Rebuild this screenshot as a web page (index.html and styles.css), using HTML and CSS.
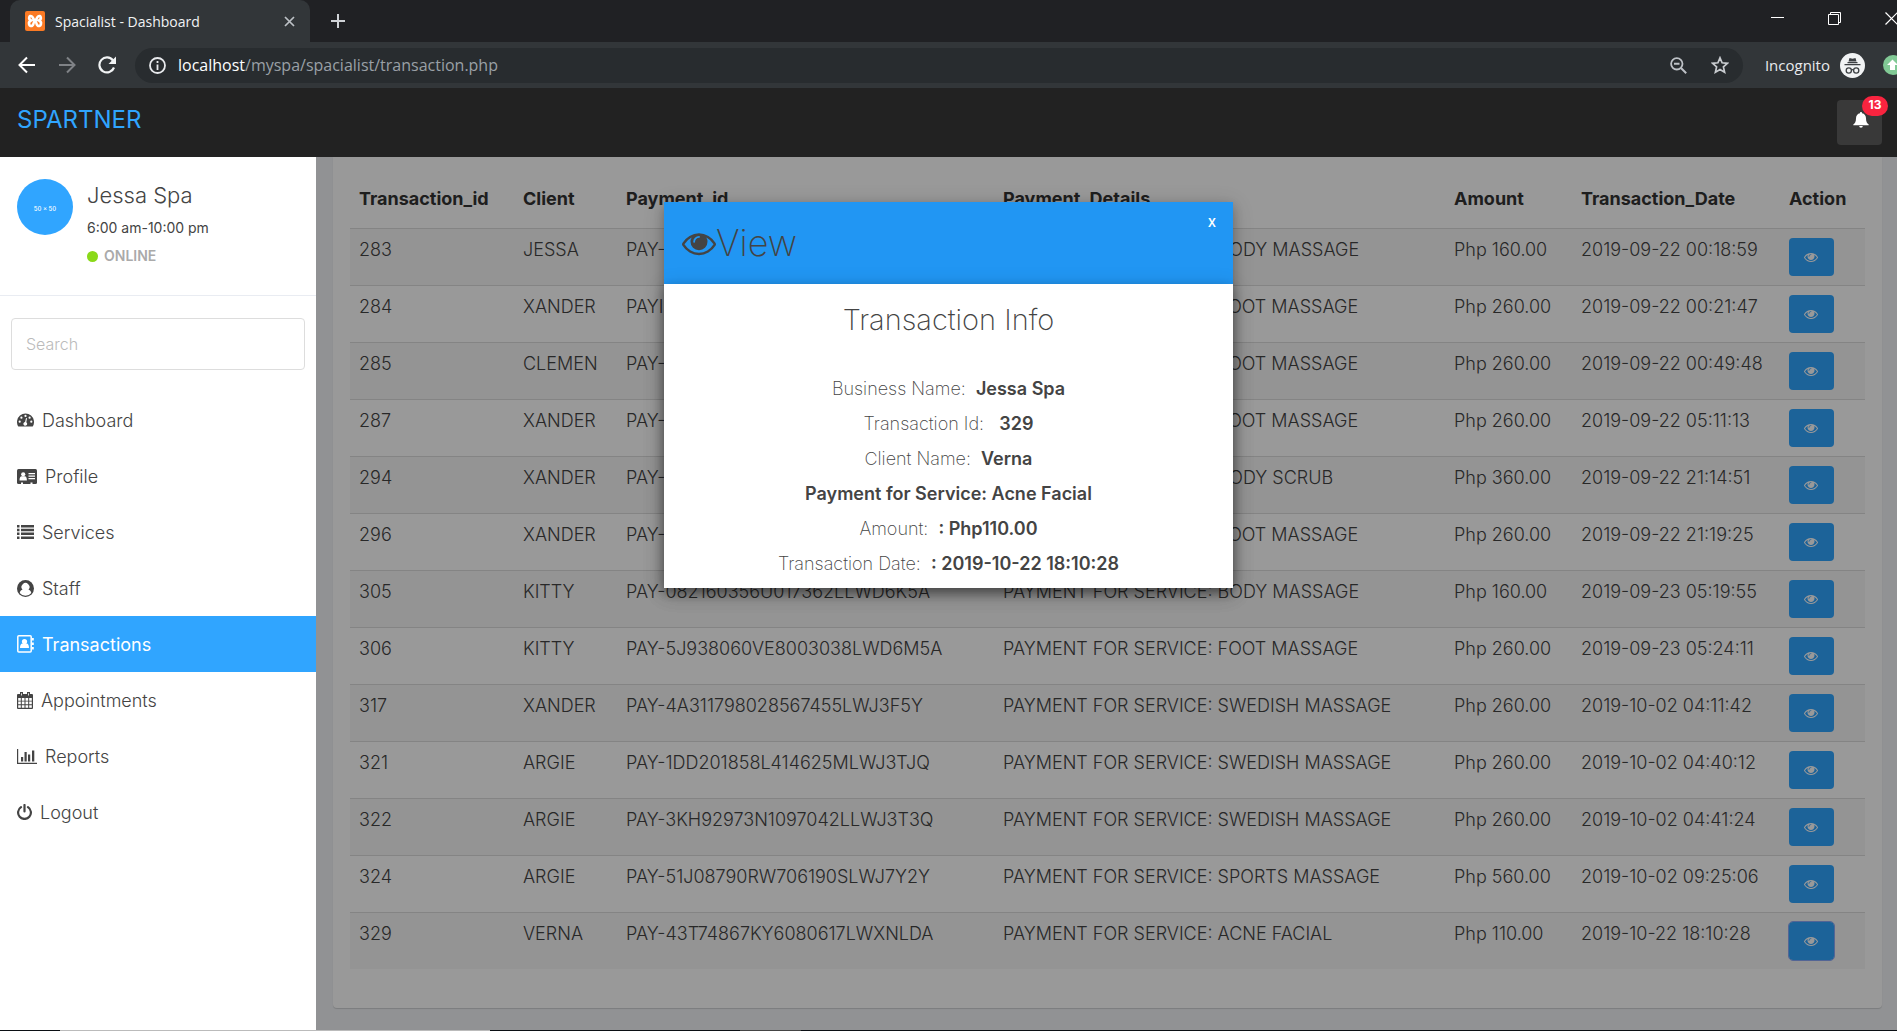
FILE: index.html
```html
<!DOCTYPE html>
<html lang="en">
<head>
<meta charset="utf-8">
<title>Spacialist - Dashboard</title>
<link rel="stylesheet" href="styles.css">
</head>
<body>
<svg class="sprite" aria-hidden="true">
  <symbol id="eye" viewBox="0 0 1792 1792"><path d="M1664 960q-152-236-381-353 61 104 61 225 0 185-131.5 316.5t-316.5 131.5-316.5-131.5-131.5-316.5q0-121 61-225-229 117-381 353 133 205 333.5 326.5t434.5 121.5 434.5-121.5 333.5-326.5zm-720-384q0-20-14-34t-34-14q-125 0-214.5 89.5t-89.5 214.5q0 20 14 34t34 14 34-14 14-34q0-86 61-147t147-61q20 0 34-14t14-34zm848 384q0 34-20 69-140 230-376.5 368.5t-499.5 138.5-499.5-139-376.5-368q-20-35-20-69t20-69q140-229 376.5-368t499.5-139 499.5 139 376.5 368q20 35 20 69z"/></symbol>
</svg>

<div class="browser">
  <div class="tabs">
    <div class="tab">
      <svg class="favicon" viewBox="0 0 20 20"><rect width="20" height="20" rx="2" fill="#fb7a24"/><path d="M7 5.500C4 3.500 3 8 6 9.500C2.500 11 4 16.500 7.500 14.500C9 13.500 8 10.500 10 10.500S11 13.500 12.500 14.500C16 16.500 17.500 11 14 9.500C17 8 16 3.500 13 5.500C11.500 6.500 12 9 10 9S8.500 6.500 7 5.500Z" fill="none" stroke="#fff" stroke-width="2.600"/></svg>
      <span class="tab-title">Spacialist - Dashboard</span>
      <button class="plain" aria-label="Close tab"><svg width="11" height="11" viewBox="0 0 11 11"><path d="M1 1l9 9M10 1l-9 9" stroke="#bdc1c6" stroke-width="1.700"/></svg></button>
    </div>
    <button class="plain" aria-label="New tab"><svg width="16" height="16" viewBox="0 0 16 16"><path d="M8 1v14M1 8h14" stroke="#d0d3d7" stroke-width="2"/></svg></button>
    <div class="window-buttons">
      <button class="plain" aria-label="Minimize"><svg width="13" height="13" viewBox="0 0 13 13"><path d="M0 5.500h13" stroke="#fff"/></svg></button>
      <button class="plain" aria-label="Restore"><svg width="13" height="13" viewBox="0 0 13 13"><path d="M.5 2.500h10v10H.5zM2.500 2.500v-2h10v10h-2" fill="none" stroke="#fff"/></svg></button>
      <button class="plain" aria-label="Close"><svg width="13" height="13" viewBox="0 0 13 13"><path d="M.5.5l12 12M12.500.5l-12 12" stroke="#fff" stroke-width="1.200"/></svg></button>
    </div>
  </div>
  <div class="toolbar">
    <div class="nav-buttons">
      <button class="plain" aria-label="Back"><svg width="18" height="18" viewBox="0 0 18 18"><path d="M17 9H2M9 1.500L1.500 9 9 16.500" fill="none" stroke="#fff" stroke-width="2"/></svg></button>
      <button class="plain" aria-label="Forward"><svg width="18" height="18" viewBox="0 0 18 18"><path d="M1 9h15M9 1.500L16.500 9 9 16.500" fill="none" stroke="#7f8286" stroke-width="2"/></svg></button>
      <button class="plain" aria-label="Reload"><svg width="18" height="18" viewBox="0 0 18 18"><path d="M15 4.500A7.500 7.500 0 1 0 16 11.500" fill="none" stroke="#f1f3f4" stroke-width="2.200"/><path d="M18 .5V8h-7.500z" fill="#f1f3f4"/></svg></button>
    </div>
    <div class="address">
      <svg width="17" height="17" viewBox="0 0 17 17"><circle cx="8.500" cy="8.500" r="7.500" fill="none" stroke="#e8eaed" stroke-width="1.800"/><path d="M8.500 4v2M8.500 7.500V13" stroke="#e8eaed" stroke-width="1.800"/></svg>
      <span class="url"><b>localhost</b>/myspa/spacialist/transaction.php</span>
      <button class="plain" aria-label="Zoom"><svg width="17" height="17" viewBox="0 0 17 17"><circle cx="6.800" cy="6.800" r="5.700" fill="none" stroke="#bdc1c6" stroke-width="1.800"/><path d="M4 6.800h5.500M11 11l5.200 5.200" stroke="#bdc1c6" stroke-width="2"/></svg></button>
      <button class="plain" aria-label="Bookmark"><svg width="18" height="18" viewBox="0 0 18 18"><path d="M9 1.800l2.100 5 5.400.5-4.100 3.600 1.200 5.300L9 13.400l-4.600 2.800 1.200-5.300L1.500 7.300l5.400-.5z" fill="none" stroke="#c8cbcf" stroke-width="1.700"/></svg></button>
    </div>
    <span class="incognito">Incognito</span>
    <svg class="incognito-icon" width="25" height="25" viewBox="0 0 25 25"><circle cx="12.500" cy="12.500" r="12.500" fill="#f1f3f4"/><path d="M9.500 5l3 .8 3-.8 1 3.500h-8zM7.500 9h10v1.200h-10zM4.500 11h16v1.300h-16z" fill="#3c4043"/><g fill="none" stroke="#3c4043" stroke-width="1.300"><circle cx="8.800" cy="17.500" r="2.600"/><circle cx="16.200" cy="17.500" r="2.600"/><path d="M11.400 17q1.100-.8 2.200 0"/></g></svg>
    <svg class="extension" width="20" height="20" viewBox="0 0 20 20"><circle cx="10" cy="10" r="10" fill="#81c995"/><path d="M9.500 4.500l5.500 5.500h-3v5H7v-5H4z" fill="#fff"/></svg>
  </div>
</div>

<header class="topbar">
  <a class="brand" href="#">SPARTNER</a>
  <button class="bell" aria-label="Notifications">
    <svg width="16" height="16" viewBox="0 0 16 16"><path d="M8 0a1 1 0 0 1 1 1.200C11.500 1.700 13 3.500 13 6.200c0 3.600 1 5 2.700 6.300v.8H.3v-.8C2 11.200 3 9.800 3 6.200 3 3.500 4.500 1.700 7 1.200A1 1 0 0 1 8 0zM6.200 14h3.600a1.800 1.800 0 0 1-3.600 0z" fill="#fff"/></svg>
    <span class="badge">13</span>
  </button>
</header>

<div class="layout">
  <aside class="sidebar">
    <div class="profile">
      <div class="avatar">50 x 50</div>
      <div>
        <div class="name">Jessa Spa</div>
        <div class="hours">6:00 am-10:00 pm</div>
        <div class="status"><span class="dot"></span>ONLINE</div>
      </div>
    </div>
    <form class="search"><input type="text" placeholder="Search" aria-label="Search"></form>
    <nav class="menu">
      <a href="#"><svg width="17" height="14" viewBox="0 0 17 14"><path d="M1.300 13.500A8.500 8.500 0 1 1 15.700 13.500z"/><g fill="#fff"><circle cx="2.700" cy="8.700" r="1.100"/><circle cx="4.400" cy="4.700" r="1.100"/><circle cx="8.500" cy="2.900" r="1.100"/><circle cx="12.600" cy="4.700" r="1.100"/><circle cx="14.300" cy="8.700" r="1.100"/><path d="M9 5l1 .3-.7 4a1.900 1.900 0 1 1-1.200-.3z"/></g></svg>Dashboard</a>
      <a href="#"><svg width="20" height="15" viewBox="0 0 20 15"><rect width="20" height="15" rx="1.500"/><g fill="#fff"><circle cx="6.200" cy="5.300" r="2.100"/><path d="M2.500 11.500C2.500 8.500 3.500 7.200 4.500 7.200h3.400c1 0 2 1.300 2 4.300zM11.500 4H18v1.200h-6.500zM11.500 6.500H18v1.200h-6.500zM11.500 9H18v1.200h-6.500zM4 13.500h2V15H4zM13.500 13.500h2V15h-2z"/></g></svg>Profile</a>
      <a href="#"><svg width="17" height="14" viewBox="0 0 17 14"><path d="M0 0h2.500v2.500H0zM4 0h13v2.500H4zM0 3.800h2.500v2.500H0zM4 3.800h13v2.500H4zM0 7.600h2.500v2.500H0zM4 7.600h13v2.500H4zM0 11.400h2.500v2.500H0zM4 11.400h13v2.500H4z"/></svg>Services</a>
      <a href="#"><svg width="17" height="17" viewBox="0 0 17 17"><circle cx="8.500" cy="8.500" r="8.500"/><path d="M2.700 13C3.200 10.500 4.500 9.700 5.500 9.700a4 4 0 1 1 6 0c1 0 2.300.8 2.800 3.300A7.400 7.400 0 0 1 2.700 13z" fill="#fff"/></svg>Staff</a>
      <a href="#" class="active"><svg width="17" height="18" viewBox="0 0 17 18"><rect x=".8" y=".8" width="13.400" height="16.200" rx="1" fill="none" stroke="#fff" stroke-width="1.500"/><circle cx="7.500" cy="6.500" r="2.600"/><path d="M3 13c0-3 1-4.300 2.300-4.500h4.400C11 8.700 12 10 12 13zM15 3h1.800v2.500H15zM15 7.500h1.800V10H15zM15 12h1.800v2.500H15z"/></svg>Transactions</a>
      <a href="#"><svg width="16" height="17" viewBox="0 0 16 17"><path d="M1 2h14a1 1 0 0 1 1 1v13a1 1 0 0 1-1 1H1a1 1 0 0 1-1-1V3a1 1 0 0 1 1-1z"/><path d="M3 0h3v4H3zM10 0h3v4h-3z"/><path d="M4.100 1.200h.8v2.200h-.8zM11.100 1.200h.8v2.200h-.8zM1.200 6h2.600v2.700H1.200zM4.800 6h2.700v2.700H4.800zM8.500 6h2.700v2.700H8.500zM12.200 6h2.600v2.700h-2.600zM1.200 9.600h2.600v2.700H1.200zM4.800 9.600h2.700v2.700H4.800zM8.500 9.600h2.700v2.700H8.500zM12.200 9.600h2.600v2.700h-2.600zM1.200 13.200h2.600v2.600H1.200zM4.800 13.200h2.700v2.600H4.800zM8.500 13.200h2.700v2.600H8.500zM12.200 13.200h2.600v2.600h-2.600z" fill="#fff"/></svg>Appointments</a>
      <a href="#"><svg width="20" height="15" viewBox="0 0 20 15"><path d="M0 0h1.200v13.700H20V15H0zM4 8h2.200v4.500H4zM7.500 3h2.200v9.500H7.500zM11 5.500h2.200v7H11zM15 1.500h2.300v11H15z"/></svg>Reports</a>
      <a href="#"><svg width="15" height="16" viewBox="0 0 15 16"><path d="M4 3.200a6.400 6.400 0 1 0 7 0M7.500 1v6.500" fill="none" stroke="#444" stroke-width="2.200" stroke-linecap="round"/></svg>Logout</a>
    </nav>
  </aside>

  <main class="main">
    <section class="card">
      <table>
        <colgroup><col class="c-id"><col class="c-client"><col class="c-pay"><col><col class="c-amount"><col class="c-date"><col class="c-action"></colgroup>
        <thead><tr><th>Transaction_id</th><th>Client</th><th>Payment_id</th><th>Payment_Details</th><th>Amount</th><th>Transaction_Date</th><th>Action</th></tr></thead>
        <tbody>
          <tr><td>283</td><td>JESSA</td><td>PAY-</td><td>PAYMENT FOR SERVICE: BODY MASSAGE</td><td>Php 160.00</td><td>2019-09-22 00:18:59</td><td><button class="view" aria-label="View"><svg><use href="#eye"/></svg></button></td></tr>
          <tr><td>284</td><td>XANDER</td><td>PAYID</td><td>PAYMENT FOR SERVICE: FOOT MASSAGE</td><td>Php 260.00</td><td>2019-09-22 00:21:47</td><td><button class="view" aria-label="View"><svg><use href="#eye"/></svg></button></td></tr>
          <tr><td>285</td><td>CLEMEN</td><td>PAY-</td><td>PAYMENT FOR SERVICE: FOOT MASSAGE</td><td>Php 260.00</td><td>2019-09-22 00:49:48</td><td><button class="view" aria-label="View"><svg><use href="#eye"/></svg></button></td></tr>
          <tr><td>287</td><td>XANDER</td><td>PAY-</td><td>PAYMENT FOR SERVICE: FOOT MASSAGE</td><td>Php 260.00</td><td>2019-09-22 05:11:13</td><td><button class="view" aria-label="View"><svg><use href="#eye"/></svg></button></td></tr>
          <tr><td>294</td><td>XANDER</td><td>PAY-</td><td>PAYMENT FOR SERVICE: BODY SCRUB</td><td>Php 360.00</td><td>2019-09-22 21:14:51</td><td><button class="view" aria-label="View"><svg><use href="#eye"/></svg></button></td></tr>
          <tr><td>296</td><td>XANDER</td><td>PAY-</td><td>PAYMENT FOR SERVICE: FOOT MASSAGE</td><td>Php 260.00</td><td>2019-09-22 21:19:25</td><td><button class="view" aria-label="View"><svg><use href="#eye"/></svg></button></td></tr>
          <tr><td>305</td><td>KITTY</td><td>PAY-082160356U017362LLWD6K5A</td><td>PAYMENT FOR SERVICE: BODY MASSAGE</td><td>Php 160.00</td><td>2019-09-23 05:19:55</td><td><button class="view" aria-label="View"><svg><use href="#eye"/></svg></button></td></tr>
          <tr><td>306</td><td>KITTY</td><td>PAY-5J938060VE8003038LWD6M5A</td><td>PAYMENT FOR SERVICE: FOOT MASSAGE</td><td>Php 260.00</td><td>2019-09-23 05:24:11</td><td><button class="view" aria-label="View"><svg><use href="#eye"/></svg></button></td></tr>
          <tr><td>317</td><td>XANDER</td><td>PAY-4A311798028567455LWJ3F5Y</td><td>PAYMENT FOR SERVICE: SWEDISH MASSAGE</td><td>Php 260.00</td><td>2019-10-02 04:11:42</td><td><button class="view" aria-label="View"><svg><use href="#eye"/></svg></button></td></tr>
          <tr><td>321</td><td>ARGIE</td><td>PAY-1DD201858L414625MLWJ3TJQ</td><td>PAYMENT FOR SERVICE: SWEDISH MASSAGE</td><td>Php 260.00</td><td>2019-10-02 04:40:12</td><td><button class="view" aria-label="View"><svg><use href="#eye"/></svg></button></td></tr>
          <tr><td>322</td><td>ARGIE</td><td>PAY-3KH92973N1097042LLWJ3T3Q</td><td>PAYMENT FOR SERVICE: SWEDISH MASSAGE</td><td>Php 260.00</td><td>2019-10-02 04:41:24</td><td><button class="view" aria-label="View"><svg><use href="#eye"/></svg></button></td></tr>
          <tr><td>324</td><td>ARGIE</td><td>PAY-51J08790RW706190SLWJ7Y2Y</td><td>PAYMENT FOR SERVICE: SPORTS MASSAGE</td><td>Php 560.00</td><td>2019-10-02 09:25:06</td><td><button class="view" aria-label="View"><svg><use href="#eye"/></svg></button></td></tr>
          <tr><td>329</td><td>VERNA</td><td>PAY-43T74867KY6080617LWXNLDA</td><td>PAYMENT FOR SERVICE: ACNE FACIAL</td><td>Php 110.00</td><td>2019-10-22 18:10:28</td><td><button class="view focused" aria-label="View"><svg><use href="#eye"/></svg></button></td></tr>
        </tbody>
      </table>
    </section>
  </main>
</div>
<div class="overlay"></div>
<div class="modal" role="dialog" aria-label="View">
  <div class="modal-head">
    <h2><svg><use href="#eye"/></svg>View</h2>
    <button class="modal-close" aria-label="Close">x</button>
  </div>
  <div class="modal-body">
    <h3>Transaction Info</h3>
    <p>Business Name: &nbsp;<b>Jessa Spa</b></p>
    <p>Transaction Id: &nbsp; <b>329</b></p>
    <p>Client Name: &nbsp;<b>Verna</b></p>
    <p><b>Payment for Service: Acne Facial</b></p>
    <p>Amount: &nbsp;<b>: Php110.00</b></p>
    <p>Transaction Date: &nbsp;<b>: 2019-10-22 18:10:28</b></p>
  </div>
</div>
<div class="taskbar"><span class="task-search"></span><span class="task-active"></span></div>
</body>
</html>
```
FILE: styles.css
```css
* { box-sizing: border-box; }
body {
  margin: 0;
  min-height: 100vh;
  display: flex;
  flex-direction: column;
  position: relative;
  overflow-x: hidden;
  font-family: Inter, "Open Sans", sans-serif;
  font-weight: 300;
  font-size: 18px;
  color: #444;
  background: #f2f4f7;
}
svg { flex: none; display: block; }
.sprite { position: absolute; width: 0; height: 0; }
button { font: inherit; border: 0; cursor: pointer; }
.plain { background: none; padding: 0; }

/* browser frame */
.browser { font-family: "Open Sans", "Noto Sans", sans-serif; font-weight: 400; color: #e8eaed; }
.tabs { height: 42px; background: #202124; display: flex; align-items: center; padding-left: 10px; gap: 20px; }
.tab {
  width: 300px; height: 42px; background: #323639; border-radius: 10px 10px 0 0;
  display: flex; align-items: center; gap: 10px; padding: 0 15px;
}
.favicon { width: 20px; height: 20px; }
.tab-title { flex: 1; font-size: 14px; color: #f1f3f4; }
.window-buttons { margin: 0 -1px 6px auto; display: flex; gap: 44px; }
.toolbar { height: 46px; background: #323639; display: flex; align-items: center; padding-left: 18px; overflow: hidden; }
.nav-buttons { display: flex; gap: 22px; width: 117px; }
.address {
  flex: 1; height: 35px; border-radius: 18px; background: #282c2f;
  display: flex; align-items: center; gap: 12px; padding: 0 14px;
}
.url { flex: 1; font-size: 16px; line-height: 24px; color: #9aa0a6; }
.url b { font-weight: 400; color: #fff; }
.address .plain + .plain { margin-left: 12px; }
.incognito { font-size: 15px; margin: 0 10px 0 22px; }
.extension { margin: 0 -6px 0 18px; }

/* top bar */
.topbar {
  height: 69px; background: #222; display: flex; justify-content: space-between;
  align-items: flex-start; padding: 12px 15px 0 17px;
}
.brand { color: #30a5ff; font-size: 24px; font-weight: 400; line-height: 40px; text-decoration: none; }
.bell {
  position: relative; width: 45px; height: 45px; border-radius: 4px; background: #393939;
  display: flex; justify-content: center; padding: 12px 0 0 3px;
}
.badge {
  position: absolute; top: -4px; right: -6px; width: 26px; height: 20px; border-radius: 10px;
  background: #f9243f; color: #fff; font-size: 12px; line-height: 18px; font-weight: 700;
}

/* sidebar */
.layout { flex: 1; display: flex; }
.sidebar { width: 316px; background: #fff; position: relative; z-index: 2; }
.profile { display: flex; gap: 14px; height: 139px; padding: 22px 17px 0; border-bottom: 1px solid #e9ecf2; }
.avatar {
  width: 56px; height: 56px; border-radius: 50%; background: #30a5ff; color: #fff;
  font-size: 6px; line-height: 60px; font-weight: 500; text-align: center;
}
.name { font-size: 22px; line-height: 32px; }
.hours { font-size: 14px; line-height: 34px; font-weight: 400; }
.status { display: flex; align-items: center; gap: 6px; font-size: 14px; line-height: 22px; font-weight: 600; color: #aaa; }
.dot { width: 11px; height: 11px; border-radius: 50%; background: #8ad919; }
.search { padding: 22px 11px; }
.search input {
  display: block; width: 100%; height: 52px; border: 1px solid #ddd; border-radius: 4px; padding: 0 14px;
  font: inherit; font-size: 16px; color: #444;
}
.search input::placeholder { color: #bbb; }
.menu a { display: flex; align-items: center; gap: 8px; height: 56px; padding: 0 17px; color: #444; text-decoration: none; fill: #444; }
.menu .active { background: #30a5ff; color: #fff; fill: #fff; font-weight: 400; }

/* transactions table */
.main { flex: 1; padding: 0 15px 21px 17px; }
.card { background: #fff; border-radius: 0 0 4px 4px; padding: 15px 17px 39px; box-shadow: 0 1px 1px rgba(0, 0, 0, .15); }
table { width: 100%; table-layout: fixed; border-collapse: separate; border-spacing: 0; }
.c-id { width: 164px; }
.c-client { width: 103px; }
.c-pay { width: 377px; }
.c-amount { width: 127px; }
.c-date { width: 208px; }
.c-action { width: 85px; }
th, td { padding: 9px 9px 0; text-align: left; vertical-align: top; line-height: 24px; white-space: nowrap; }
th { height: 56px; padding-top: 15px; font-weight: 700; color: #333; }
td { height: 57px; border-top: 1px solid #ddd; }
tbody tr:nth-child(odd) { background: #f7f7f7; }
.view { display: block; width: 45px; height: 38px; border-radius: 4px; background: #30a5ff; padding: 0 15px; }
.view svg { width: 14px; height: 14px; fill: #fff; }
.focused { outline: 1px solid #8aa8f8; }

/* dialog */
.overlay { position: absolute; top: 157px; right: 0; bottom: 0; left: 0; background: rgba(0, 0, 0, .4); z-index: 1; }
.modal {
  position: absolute; top: 202px; left: 35%; width: 30%; z-index: 3; background: #fff;
  box-shadow: 0 4px 10px rgba(0, 0, 0, .2), 0 4px 20px rgba(0, 0, 0, .19);
}
.modal-head { display: flex; justify-content: space-between; align-items: flex-start; height: 82px; background: #2196f3; padding: 0 5px 0 18px; }
.modal-head h2 { display: flex; align-items: center; margin: 16px 0 0; font-size: 36px; line-height: 50px; font-weight: 200; }
.modal-head svg { width: 34px; height: 34px; fill: #444; }
.modal-close { background: none; color: #fff; font-size: 15px; font-weight: 500; line-height: 24px; padding: 8px 12px; }
.modal-body { box-shadow: 0 4px 10px rgba(0, 0, 0, .2), 0 4px 20px rgba(0, 0, 0, .19); text-align: center; padding: 18px 16px 7px; }
.modal-body h3 { margin: 0 0 33px; font-size: 29px; line-height: 36px; font-weight: 200; }
.modal-body p { margin: 0; line-height: 35px; font-weight: 200; }
.modal-body b { font-weight: 600; }

/* edge of the desktop taskbar */
.taskbar { height: 1px; background: #0b0f14; display: flex; position: relative; z-index: 3; padding-left: 60px; gap: 250px; }
.task-search { width: 430px; background: #bbb; }
.task-active { width: 61px; background: #444; }
```
